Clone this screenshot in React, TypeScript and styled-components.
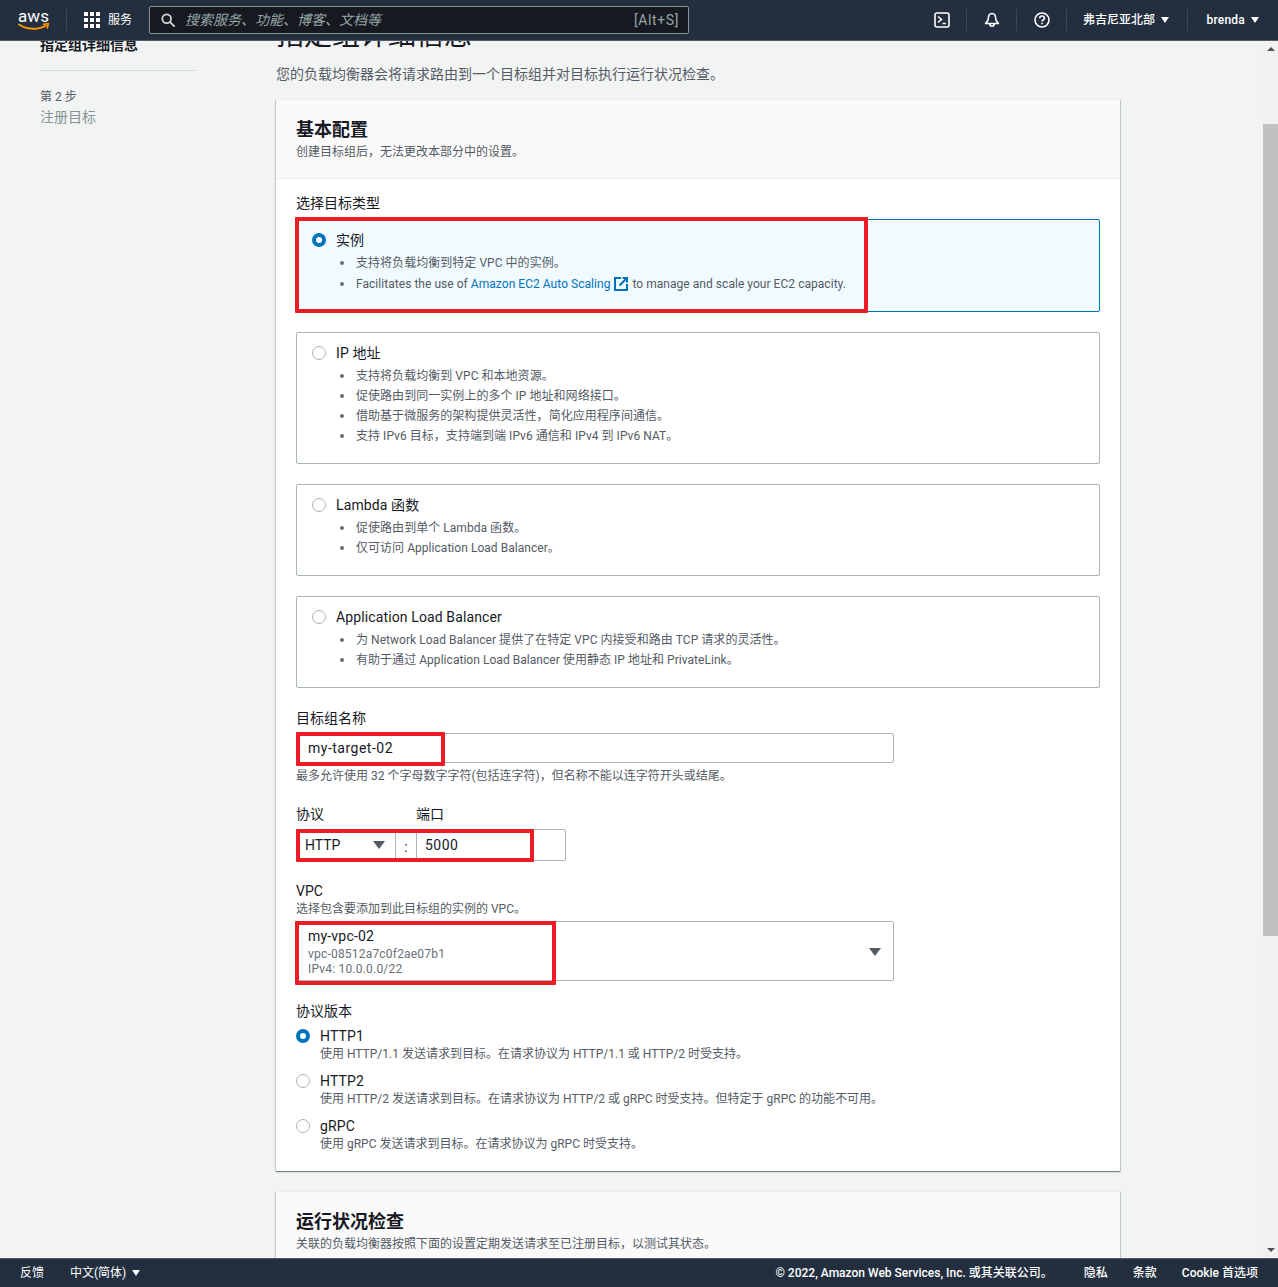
import React from 'react';
import styled, { createGlobalStyle } from 'styled-components';

const GlobalStyle = createGlobalStyle`
    html, body {
        margin: 0;
        padding: 0;
        background: #f2f3f3;
    }
    body {
        font-family: Roboto, "Noto Sans CJK SC", sans-serif;
        font-size: 14px;
        line-height: 20px;
        color: #16191f;
    }
    * {
        box-sizing: border-box;
    }
`;

const Page = styled.div`
    width: 100%;
    height: 1287px;
    display: flex;
    flex-direction: column;
    overflow: hidden;
`;

const TopBar = styled.header`
    height: 41px;
    flex: none;
    display: flex;
    align-items: center;
    background: #232f3e;
    border-bottom: 1px solid #545b64;
    color: #fff;
    position: relative;
    z-index: 2;
`;

const LogoLink = styled.div`
    width: 67px;
    padding-left: 18px;
    height: 22px;
    display: flex;
    align-items: center;
    border-right: 1px solid #414750;
`;

const ServicesMenu = styled.div`
    width: 82px;
    padding-left: 17px;
    display: flex;
    align-items: center;
    gap: 8px;
    font-size: 12px;
`;

const SearchBox = styled.div`
    width: 540px;
    height: 28px;
    display: flex;
    align-items: center;
    padding: 0 9px 0 11px;
    background: #16191f;
    border: 1px solid #879596;
    border-radius: 2px;
`;

const SearchText = styled.span`
    flex: 1;
    margin-left: 10px;
    font-size: 14px;
    font-style: italic;
    color: #95a5a6;
`;

const SearchKey = styled.span`
    font-size: 14px;
    letter-spacing: 0.6px;
    color: #95a5a6;
`;

const BarRight = styled.div`
    margin-left: auto;
    display: flex;
    align-items: center;
`;

const IconCell = styled.div`
    width: 50px;
    height: 22px;
    display: flex;
    align-items: center;
    justify-content: center;
    border-right: 1px solid #414750;
`;

const MenuCell = styled.div<{ $width: number; $divider?: boolean }>`
    width: ${(props) => props.$width}px;
    height: 22px;
    display: flex;
    align-items: center;
    justify-content: flex-end;
    gap: 6px;
    font-size: 12px;
    font-weight: 500;
    letter-spacing: ${(props) => (props.$divider ? 0 : 0.2)}px;
    padding-right: ${(props) => (props.$divider ? 18 : 19)}px;
    border-right: ${(props) => (props.$divider ? '1px solid #414750' : 'none')};
`;

const WhiteCaret = styled.span`
    width: 0;
    height: 0;
    border-left: 4px solid transparent;
    border-right: 4px solid transparent;
    border-top: 6px solid #fff;
`;

const Middle = styled.div`
    flex: 1;
    min-height: 0;
    display: flex;
`;

const Viewport = styled.div`
    flex: 1;
    min-width: 0;
    overflow: hidden;
`;

const ScrollContent = styled.div`
    margin-top: -23px;
    display: flex;
    align-items: flex-start;
`;

const SideNav = styled.nav`
    width: 276px;
    flex: none;
    padding-left: 40px;
`;

const StepLabel = styled.div`
    width: 156px;
    font-size: 12px;
    line-height: 16px;
    color: #545b64;
`;

const StepCurrent = styled.div`
    height: 20px;
    font-weight: 700;
    margin-top: 1px;
`;

const StepDivider = styled.hr`
    width: 156px;
    height: 1px;
    margin: 15px 0 18px;
    border: 0;
    background: #d5dbdb;
`;

const StepMuted = styled.div`
    margin-top: 2px;
    color: #879596;
`;

const MainColumn = styled.main`
    width: 844px;
    flex: none;
`;

const PageTitle = styled.h1`
    margin: 0;
    font-size: 28px;
    line-height: 36px;
    font-weight: 400;
`;

const PageDesc = styled.p`
    margin: 10px 0 15px;
    color: #545b64;
    font-size: 14px;
`;

const Card = styled.section`
    background: #fff;
    border-top: 1px solid #eaeded;
    box-shadow: 0 1px 1px 0 rgba(0, 28, 36, 0.3), 1px 1px 1px 0 rgba(0, 28, 36, 0.15), -1px 1px 1px 0 rgba(0, 28, 36, 0.15);
    margin-bottom: 20px;
`;

const CardHead = styled.div`
    background: #fafafa;
    height: 79px;
    padding: 19px 20px 0;
    border-bottom: 1px solid #eaeded;
`;

const CardTitle = styled.h2`
    margin: 0;
    font-size: 18px;
    line-height: 22px;
    font-weight: 700;
`;

const Hint = styled.div`
    font-size: 12px;
    line-height: 16px;
    color: #545b64;
`;

const CardSub = styled(Hint)`
    margin-top: 3px;
`;

const CardBody = styled.div`
    padding: 14px 20px 19px;
`;

const FieldLabel = styled.div<{ $top?: number }>`
    margin-top: ${(props) => props.$top || 0}px;
    line-height: 20px;
`;

const TileList = styled.div`
    position: relative;
    margin-top: 6px;
    display: flex;
    flex-direction: column;
    gap: 20px;
`;

const Tile = styled.div<{ $selected?: boolean }>`
    display: flex;
    flex-direction: column;
    padding: 10px 15px 17px;
    border: 1px solid ${(props) => (props.$selected ? '#0073bb' : '#aab7b8')};
    background: ${(props) => (props.$selected ? '#f1faff' : '#fff')};
    border-radius: 2px;
`;

const RadioRow = styled.div`
    display: flex;
    align-items: center;
    gap: 10px;
    height: 20px;
    letter-spacing: 0.12px;
`;

const Radio = styled.span<{ $checked?: boolean }>`
    width: 14px;
    height: 14px;
    flex: none;
    border-radius: 50%;
    background: #fff;
    border: ${(props) => (props.$checked ? '4px solid #0073bb' : '1px solid #aab7b8')};
`;

const BulletList = styled.ul`
    margin: 3px 0 0;
    padding: 0 0 0 44px;
    list-style: none;
`;

const Bullet = styled.li<{ $tall?: boolean }>`
    position: relative;
    font-size: 12px;
    line-height: 20px;
    height: ${(props) => (props.$tall ? 21 : 20)}px;
    letter-spacing: 0.04px;
    color: #545b64;
    &::before {
        content: '';
        position: absolute;
        left: -16px;
        top: 8px;
        width: 4px;
        height: 4px;
        border-radius: 50%;
        background: #687078;
    }
`;

const Link = styled.span`
    color: #0073bb;
`;

const ExternalIcon = styled.svg`
    vertical-align: -3px;
    margin: 0 4px;
`;

const Annotated = styled.div`
    position: relative;
`;

const RedBox = styled.div<{ $left: number; $top: number; $width: number; $height: number }>`
    position: absolute;
    left: ${(props) => props.$left}px;
    top: ${(props) => props.$top}px;
    width: ${(props) => props.$width}px;
    height: ${(props) => props.$height}px;
    border: 4px solid #ed1c24;
    border-radius: 1px;
    pointer-events: none;
    z-index: 1;
`;

const TextField = styled.div`
    width: 598px;
    height: 30px;
    margin-top: 5px;
    padding: 0 11px;
    display: flex;
    align-items: center;
    letter-spacing: 0.5px;
    background: #fff;
    border: 1px solid #aab7b8;
    border-radius: 2px;
`;

const FieldHint = styled(Hint)`
    margin-top: 5px;
`;

const LabelPair = styled.div`
    margin-top: 20px;
    display: flex;
    line-height: 20px;
`;

const PairFirst = styled.div`
    width: 120px;
`;

const PortGroup = styled.div`
    width: 270px;
    height: 32px;
    margin-top: 5px;
    display: flex;
    align-items: center;
    background: #fff;
    border: 1px solid #aab7b8;
    border-radius: 2px;
`;

const ProtocolSelect = styled.div`
    width: 98px;
    height: 100%;
    padding: 0 10px 0 8px;
    display: flex;
    align-items: center;
    justify-content: space-between;
`;

const GreyCaret = styled.span`
    width: 0;
    height: 0;
    border-left: 6px solid transparent;
    border-right: 6px solid transparent;
    border-top: 8px solid #545b64;
`;

const Colon = styled.div`
    width: 22px;
    height: 100%;
    display: flex;
    align-items: center;
    justify-content: center;
    padding-top: 3px;
    border-left: 1px solid #aab7b8;
    border-right: 1px solid #aab7b8;
    color: #16191f;
`;

const PortValue = styled.div`
    padding-left: 8px;
    letter-spacing: 0.5px;
`;

const VpcDesc = styled(Hint)`
    margin-top: 0;
`;

const VpcSelect = styled.div`
    width: 598px;
    height: 60px;
    margin-top: 4px;
    padding: 4px 12px 0 11px;
    display: flex;
    justify-content: space-between;
    letter-spacing: 0.2px;
    background: #fff;
    border: 1px solid #aab7b8;
    border-radius: 2px;
`;

const VpcName = styled.div`
    line-height: 20px;
    margin-bottom: 1px;
`;

const VpcMeta = styled(Hint)`
    line-height: 15px;
    color: #687078;
`;

const VpcCaret = styled(GreyCaret)`
    margin-top: 22px;
`;

const VersionList = styled.div`
    margin-top: 5px;
    display: flex;
    flex-direction: column;
    gap: 9px;
`;

const VersionDesc = styled(Hint)`
    margin-left: 24px;
`;

const BottomBar = styled.footer`
    height: 29px;
    flex: none;
    display: flex;
    align-items: center;
    padding-left: 20px;
    background: #232f3e;
    border-top: 1px solid #545b64;
    color: #fff;
    font-size: 12px;
    position: relative;
    z-index: 2;
`;

const LanguageMenu = styled.div`
    margin-left: 26px;
    display: flex;
    align-items: center;
    gap: 6px;
`;

const FooterLinks = styled.div`
    margin-left: auto;
    padding-right: 20px;
    display: flex;
    gap: 25px;
    font-weight: 500;
`;

const Copyright = styled.span`
    margin-right: 6px;
    margin-left: 5px;
`;

const ScrollBar = styled.div`
    width: 15px;
    flex: none;
    background: #f1f1f1;
    display: flex;
    flex-direction: column;
    align-items: stretch;
`;

const ScrollThumb = styled.div`
    height: 812px;
    margin-top: 73px;
    background: #c1c1c1;
`;

const ArrowUp = styled.span`
    align-self: center;
    margin-top: 6px;
    width: 0;
    height: 0;
    border-left: 4px solid transparent;
    border-right: 4px solid transparent;
    border-bottom: 4px solid #505050;
`;

const ArrowDown = styled.span`
    align-self: center;
    margin-top: auto;
    margin-bottom: 6px;
    width: 0;
    height: 0;
    border-left: 4px solid transparent;
    border-right: 4px solid transparent;
    border-top: 4px solid #505050;
`;

const AwsLogo = () => (
    <svg width="32" height="22" viewBox="0 0 32 22">
        <text x="0" y="13" fontFamily="Roboto, sans-serif" fontSize="17" fontWeight="400" fill="#fff" textLength="31">aws</text>
        <path d="M1 15.5c8 5.500 20 5.500 27 1" fill="none" stroke="#ff9900" strokeWidth="1.800" strokeLinecap="round" />
        <path d="M25.500 15.200l4.800-.6-1 4.400" fill="none" stroke="#ff9900" strokeWidth="1.500" strokeLinecap="round" />
    </svg>
);

const GridIcon = () => (
    <svg width="16" height="16" viewBox="0 0 16 16" fill="#fff">
        {[0, 6, 12].map((y) => [0, 6, 12].map((x) => <rect key={`${x}-${y}`} x={x} y={y} width="4" height="4" />))}
    </svg>
);

const SearchIcon = () => (
    <svg width="14" height="14" viewBox="0 0 16 16" fill="none" stroke="#d5dbdb" strokeWidth="2">
        <circle cx="6.500" cy="6.500" r="5" />
        <path d="M10.500 10.500l4.500 4.500" strokeLinecap="round" />
    </svg>
);

const TerminalIcon = () => (
    <svg width="16" height="16" viewBox="0 0 16 16" fill="none" stroke="#fff" strokeWidth="1.600">
        <rect x="1" y="1" width="14" height="14" rx="2" />
        <path d="M4 4.500l3.500 3-3.500 3M8.500 11.500h3.500" />
    </svg>
);

const BellIcon = () => (
    <svg width="16" height="16" viewBox="0 0 16 16" fill="none" stroke="#fff" strokeWidth="1.600">
        <path d="M8 1.500c-2.500 0-3.500 2-3.500 4 0 3-1.300 4.500-3 6h13c-1.700-1.500-3-3-3-6 0-2-1-4-3.500-4z" strokeLinejoin="round" />
        <path d="M5.800 12c0 3 4.400 3 4.400 0" />
    </svg>
);

const HelpIcon = () => (
    <svg width="16" height="16" viewBox="0 0 16 16" fill="none" stroke="#fff" strokeWidth="1.600">
        <circle cx="8" cy="8" r="7" />
        <path d="M5.700 6.200c0-3 4.700-3 4.700 0 0 1.800-2.400 1.700-2.400 3.300" />
        <path d="M8 10.800v1.500" />
    </svg>
);

const ExternalLink = () => (
    <ExternalIcon width="14" height="14" viewBox="0 0 14 14" fill="none" stroke="#0073bb" strokeWidth="2">
        <path d="M7 1H1v12h12V7" />
        <path d="M5.500 8.500L13 1M8.500 1H13v4.500" />
    </ExternalIcon>
);

interface TileItem {
    title: string;
    bullets: string[];
}

const tiles: TileItem[] = [
    {
        title: 'IP 地址',
        bullets: [
            '支持将负载均衡到 VPC 和本地资源。',
            '促使路由到同一实例上的多个 IP 地址和网络接口。',
            '借助基于微服务的架构提供灵活性，简化应用程序间通信。',
            '支持 IPv6 目标，支持端到端 IPv6 通信和 IPv4 到 IPv6 NAT。',
        ],
    },
    {
        title: 'Lambda 函数',
        bullets: ['促使路由到单个 Lambda 函数。', '仅可访问 Application Load Balancer。'],
    },
    {
        title: 'Application Load Balancer',
        bullets: [
            '为 Network Load Balancer 提供了在特定 VPC 内接受和路由 TCP 请求的灵活性。',
            '有助于通过 Application Load Balancer 使用静态 IP 地址和 PrivateLink。',
        ],
    },
];

const versions = [
    { name: 'HTTP1', desc: '使用 HTTP/1.1 发送请求到目标。在请求协议为 HTTP/1.1 或 HTTP/2 时受支持。', checked: true },
    { name: 'HTTP2', desc: '使用 HTTP/2 发送请求到目标。在请求协议为 HTTP/2 或 gRPC 时受支持。但特定于 gRPC 的功能不可用。' },
    { name: 'gRPC', desc: '使用 gRPC 发送请求到目标。在请求协议为 gRPC 时受支持。' },
];

const App: React.FC = () => {
    return (
        <Page>
            <GlobalStyle />
            <TopBar>
                <LogoLink><AwsLogo /></LogoLink>
                <ServicesMenu><GridIcon />服务</ServicesMenu>
                <SearchBox>
                    <SearchIcon />
                    <SearchText>搜索服务、功能、博客、文档等</SearchText>
                    <SearchKey>[Alt+S]</SearchKey>
                </SearchBox>
                <BarRight>
                    <IconCell><TerminalIcon /></IconCell>
                    <IconCell><BellIcon /></IconCell>
                    <IconCell><HelpIcon /></IconCell>
                    <MenuCell $width={121} $divider>弗吉尼亚北部<WhiteCaret /></MenuCell>
                    <MenuCell $width={90}>brenda<WhiteCaret /></MenuCell>
                </BarRight>
            </TopBar>
            <Middle>
                <Viewport>
                    <ScrollContent>
                        <SideNav>
                            <StepLabel>第 1 步</StepLabel>
                            <StepCurrent>指定组详细信息</StepCurrent>
                            <StepDivider />
                            <StepLabel>第 2 步</StepLabel>
                            <StepMuted>注册目标</StepMuted>
                        </SideNav>
                        <MainColumn>
                            <PageTitle>指定组详细信息</PageTitle>
                            <PageDesc>您的负载均衡器会将请求路由到一个目标组并对目标执行运行状况检查。</PageDesc>
                            <Card>
                                <CardHead>
                                    <CardTitle>基本配置</CardTitle>
                                    <CardSub>创建目标组后，无法更改本部分中的设置。</CardSub>
                                </CardHead>
                                <CardBody>
                                    <FieldLabel>选择目标类型</FieldLabel>
                                    <TileList>
                                        <RedBox $left={-1} $top={-2} $width={573} $height={96} />
                                        <Tile $selected>
                                            <RadioRow><Radio $checked />实例</RadioRow>
                                            <BulletList>
                                                <Bullet $tall>支持将负载均衡到特定 VPC 中的实例。</Bullet>
                                                <Bullet>
                                                    Facilitates the use of <Link>Amazon EC2 Auto Scaling</Link>
                                                    <ExternalLink />
                                                    to manage and scale your EC2 capacity.
                                                </Bullet>
                                            </BulletList>
                                        </Tile>
                                        {tiles.map((tile) => (
                                            <Tile key={tile.title}>
                                                <RadioRow><Radio />{tile.title}</RadioRow>
                                                <BulletList>
                                                    {tile.bullets.map((text) => <Bullet key={text}>{text}</Bullet>)}
                                                </BulletList>
                                            </Tile>
                                        ))}
                                    </TileList>
                                    <FieldLabel $top={20}>目标组名称</FieldLabel>
                                    <Annotated>
                                        <RedBox $left={0} $top={-1} $width={149} $height={34} />
                                        <TextField>my-target-02</TextField>
                                    </Annotated>
                                    <FieldHint>最多允许使用 32 个字母数字字符(包括连字符)，但名称不能以连字符开头或结尾。</FieldHint>
                                    <LabelPair>
                                        <PairFirst>协议</PairFirst>
                                        <div>端口</div>
                                    </LabelPair>
                                    <Annotated>
                                        <RedBox $left={0} $top={0} $width={238} $height={33} />
                                        <PortGroup>
                                            <ProtocolSelect>HTTP<GreyCaret /></ProtocolSelect>
                                            <Colon>:</Colon>
                                            <PortValue>5000</PortValue>
                                        </PortGroup>
                                    </Annotated>
                                    <FieldLabel $top={20}>VPC</FieldLabel>
                                    <VpcDesc>选择包含要添加到此目标组的实例的 VPC。</VpcDesc>
                                    <Annotated>
                                        <RedBox $left={-1} $top={0} $width={261} $height={64} />
                                        <VpcSelect>
                                            <div>
                                                <VpcName>my-vpc-02</VpcName>
                                                <VpcMeta>vpc-08512a7c0f2ae07b1</VpcMeta>
                                                <VpcMeta>IPv4: 10.0.0.0/22</VpcMeta>
                                            </div>
                                            <VpcCaret />
                                        </VpcSelect>
                                    </Annotated>
                                    <FieldLabel $top={20}>协议版本</FieldLabel>
                                    <VersionList>
                                        {versions.map((version) => (
                                            <div key={version.name}>
                                                <RadioRow><Radio $checked={version.checked} />{version.name}</RadioRow>
                                                <VersionDesc>{version.desc}</VersionDesc>
                                            </div>
                                        ))}
                                    </VersionList>
                                </CardBody>
                            </Card>
                            <Card>
                                <CardHead>
                                    <CardTitle>运行状况检查</CardTitle>
                                    <CardSub>关联的负载均衡器按照下面的设置定期发送请求至已注册目标，以测试其状态。</CardSub>
                                </CardHead>
                            </Card>
                        </MainColumn>
                    </ScrollContent>
                </Viewport>
                <ScrollBar>
                    <ArrowUp />
                    <ScrollThumb />
                    <ArrowDown />
                </ScrollBar>
            </Middle>
            <BottomBar>
                反馈
                <LanguageMenu>中文(简体)<WhiteCaret /></LanguageMenu>
                <FooterLinks>
                    <Copyright>© 2022, Amazon Web Services, Inc. 或其关联公司。</Copyright>
                    <span>隐私</span>
                    <span>条款</span>
                    <span>Cookie 首选项</span>
                </FooterLinks>
            </BottomBar>
        </Page>
    );
};

export default App;
